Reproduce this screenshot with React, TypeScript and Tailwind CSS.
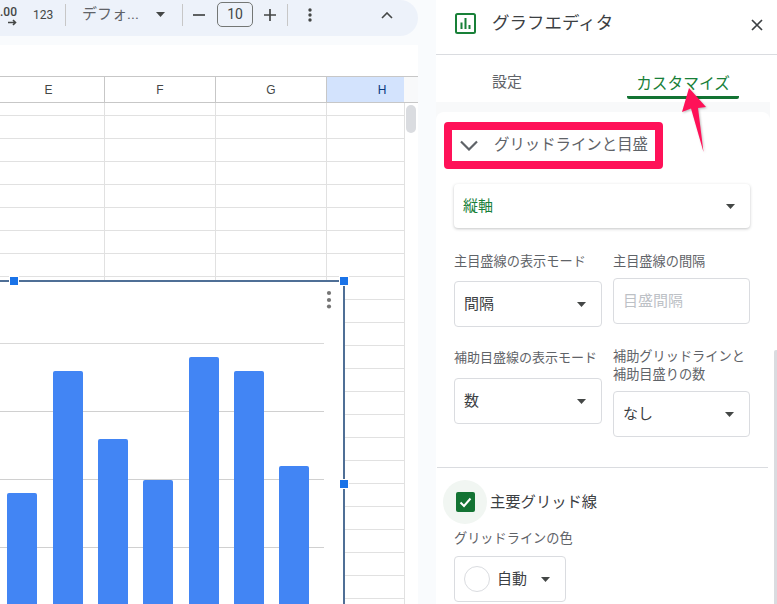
const font = "font-['Roboto','Noto_Sans_CJK_JP',sans-serif]";

const rows = Array.from({length: 22});
const bars = [111, 233, 165, 124, 247, 233, 138];

function Caret({className = ""}: {className?: string}) {
    return (
        <svg width="9" height="5" viewBox="0 0 10 5" preserveAspectRatio="none" className={`shrink-0 ${className}`}>
            <path d="M0 0h10L5 5z" fill="#444746"/>
        </svg>
    );
}

function Sep({className = ""}: {className?: string}) {
    return <div className={`w-px h-[22px] bg-[#c7c7c7] shrink-0 ${className}`}/>;
}

function Toolbar() {
    return (
        <div className="h-[36px] bg-[#edf2fa] rounded-r-[18px] flex items-center overflow-hidden text-[#444746] shrink-0 pb-[8px] pt-[1px] box-border">
            <div className="relative w-[17px] h-[22px] shrink-0 overflow-hidden">
                <span className="absolute right-0 top-[1px] text-[12px] leading-[14px] font-medium font-['Roboto']">.00</span>
                <svg width="9" height="7" viewBox="0 0 9 7" className="absolute right-0 bottom-0">
                    <path d="M0 3.5h7M5 1l2.5 2.5L5 6" stroke="#444746" strokeWidth="1.6" fill="none"/>
                </svg>
            </div>
            <span className="ml-[16px] w-[21px] text-[12px] font-['Roboto'] shrink-0">123</span>
            <Sep className="ml-[11px]"/>
            <span className="ml-[16px] w-[60px] text-[15px] whitespace-nowrap shrink-0 text-[#5f6368]">デフォ...</span>
            <Caret className="ml-[14px]"/>
            <Sep className="ml-[17px]"/>
            <svg width="12" height="2" className="ml-[10px] shrink-0"><path d="M0 1h12" stroke="#444746" strokeWidth="1.7"/></svg>
            <div className="ml-[12px] w-[36px] h-[25px] border border-[#747775] rounded-[5px] flex items-center justify-center text-[14px] font-['Roboto'] shrink-0">10</div>
            <svg width="12" height="12" className="ml-[11px] shrink-0"><path d="M0 6h12M6 0v12" stroke="#444746" strokeWidth="1.7"/></svg>
            <Sep className="ml-[11px]"/>
            <svg width="4" height="14" className="ml-[20px] shrink-0">
                <circle cx="2" cy="2" r="1.7" fill="#444746"/>
                <circle cx="2" cy="7" r="1.7" fill="#444746"/>
                <circle cx="2" cy="12" r="1.7" fill="#444746"/>
            </svg>
            <svg width="12" height="7" viewBox="0 0 12 7" className="ml-[69px] mt-[1px] shrink-0">
                <path d="M1 6l5-5 5 5" stroke="#444746" strokeWidth="1.6" fill="none"/>
            </svg>
        </div>
    );
}

function Grid() {
    return (
        <div className="flex-1 bg-white font-['Liberation_Sans',sans-serif]">
            <div className="h-[27px] flex border-t border-b border-[#c7c7c7] text-[12px] text-[#444746]">
                <div className="w-[105px] pr-[7px] border-r border-[#c7c7c7] flex items-center justify-center">E</div>
                <div className="w-[111px] border-r border-[#c7c7c7] flex items-center justify-center">F</div>
                <div className="w-[111px] border-r border-[#c7c7c7] flex items-center justify-center">G</div>
                <div className="w-[77px] pl-[33px] bg-[#d3e3fd] text-[#0b3a80] font-medium flex items-center justify-center">H</div>
                <div className="w-[14px] bg-[#f8f9fa]"/>
            </div>
            <div className="relative flex">
                <div className="w-[404px] border-r border-[#e1e1e1] box-content">
                    <div className="h-[13px] border-b border-[#e1e1e1] flex">
                        <div className="w-[105px] border-r border-[#e1e1e1]"/>
                        <div className="w-[111px] border-r border-[#e1e1e1]"/>
                        <div className="w-[111px] border-r border-[#e1e1e1]"/>
                    </div>
                    {rows.map((_, i) => (
                        <div key={i} className="h-[23px] border-b border-[#e1e1e1] flex">
                            <div className="w-[105px] border-r border-[#e1e1e1]"/>
                            <div className="w-[111px] border-r border-[#e1e1e1]"/>
                            <div className="w-[111px] border-r border-[#e1e1e1]"/>
                        </div>
                    ))}
                </div>
                <div className="absolute left-[406px] top-[2px] w-[10px] h-[28px] rounded-[5px] bg-[#dadce0]"/>
            </div>
        </div>
    );
}

function Chart() {
    return (
        <div className="absolute left-[-10px] top-[280px] w-[355px] h-[324px] bg-white border-t-2 border-r-2 border-[#4f6f96]">
            <div className="absolute left-0 top-[61px] w-[334px] h-px bg-[#d9d9d9]"/>
            <div className="absolute left-0 top-[129px] w-[334px] h-px bg-[#d0d0d0]"/>
            <div className="absolute left-0 top-[197px] w-[334px] h-px bg-[#d0d0d0]"/>
            <div className="absolute left-0 top-[265px] w-[334px] h-px bg-[#d0d0d0]"/>
            <div className="absolute left-[17.3px] right-0 bottom-0 flex items-end gap-[15.33px]">
                {bars.map((h, i) => (
                    <div key={i} className="w-[30px] bg-[#4285f4] rounded-t-[2px]" style={{height: h}}/>
                ))}
            </div>
            <svg width="6" height="20" className="absolute left-[336px] top-[8px]">
                <circle cx="3" cy="3" r="2.1" fill="#757575"/>
                <circle cx="3" cy="10" r="2.1" fill="#757575"/>
                <circle cx="3" cy="16.5" r="2.1" fill="#757575"/>
            </svg>
            <div className="absolute left-[19px] top-[-6px] w-[10px] h-[10px] bg-[#1a73e8] border border-white box-border"/>
            <div className="absolute left-[349px] top-[-6px] w-[10px] h-[10px] bg-[#1a73e8] border border-white box-border"/>
            <div className="absolute left-[349px] top-[197px] w-[10px] h-[10px] bg-[#1a73e8] border border-white box-border"/>
        </div>
    );
}

function Select({label, w, h = 46, className = ""}: {label: string; w: string; h?: number; className?: string}) {
    return (
        <div className={`${w} border border-[#dadce0] rounded-[4px] flex items-center justify-between pl-[9px] pr-[15px] text-[15px] text-[#3c4043] box-border ${className}`} style={{height: h}}>
            <span>{label}</span>
            <Caret/>
        </div>
    );
}

function Fields() {
    return (
        <>
            <div className="flex mt-[25px] ml-[18px]">
                <div className="w-[148px] flex flex-col">
                    <div className="h-[18px] text-[13.2px] leading-[18px] text-[#5f6368] whitespace-nowrap">主目盛線の表示モード</div>
                    <Select label="間隔" w="w-[148px]" className="mt-[10px]"/>
                </div>
                <div className="w-[137px] ml-[11px] flex flex-col">
                    <div className="h-[18px] text-[13.2px] leading-[18px] text-[#5f6368] whitespace-nowrap">主目盛線の間隔</div>
                    <div className="mt-[7px] h-[46px] border border-[#dadce0] rounded-[4px] flex items-center pl-[9px] text-[15px] text-[#bdc1c6]">目盛間隔</div>
                </div>
            </div>
            <div className="flex mt-[21px] ml-[18px]">
                <div className="w-[148px] flex flex-col">
                    <div className="mt-px h-[18px] text-[13px] leading-[18px] text-[#5f6368] whitespace-nowrap">補助目盛線の表示モード</div>
                    <Select label="数" w="w-[148px]" className="mt-[11px]"/>
                </div>
                <div className="w-[137px] ml-[11px] flex flex-col">
                    <div className="h-[36px] text-[13.2px] leading-[18px] text-[#5f6368] whitespace-nowrap">補助グリッドラインと<br/>補助目盛りの数</div>
                    <Select label="なし" w="w-[137px]" className="mt-[7px]"/>
                </div>
            </div>
        </>
    );
}

function Panel() {
    return (
        <div className="relative w-[341px] h-[604px] bg-white flex flex-col overflow-hidden shrink-0">
            <div className="h-[55px] border-b border-[#dadce0] flex items-center shrink-0 pb-[8px]">
                <svg width="21" height="21" viewBox="0 0 21 21" className="ml-[19px]">
                    <rect x="1" y="1" width="19" height="19" rx="1.5" fill="none" stroke="#188038" strokeWidth="2"/>
                    <path d="M5.5 9.5h2v6.5h-2zM9.5 5h2v11h-2zM13.5 12h2v4h-2z" fill="#188038"/>
                </svg>
                <span className="ml-[16px] text-[17.5px] text-[#3c4043] whitespace-nowrap">グラフエディタ</span>
                <svg width="12" height="12" viewBox="0 0 12 12" className="ml-[138px] mt-[3px]">
                    <path d="M1 1l10 10M11 1L1 11" stroke="#3c4043" strokeWidth="1.7"/>
                </svg>
            </div>
            <div className="h-[47px] flex shrink-0">
                <div className="w-[112px] ml-[15px] h-[44px] pt-[16px] text-center text-[15px] text-[#5f6368]">設定</div>
                <div className="w-[112px] ml-[64px] h-[44px] pt-[17px] text-center text-[15.7px] text-[#188038] border-b-[3px] border-[#137333] rounded-b-[2px] whitespace-nowrap">カスタマイズ</div>
            </div>
            <div className="w-[334px] flex-1 bg-[#f8f9fa] pt-[10px] flex flex-col">
                <div className="flex-1 bg-white rounded-t-[8px] flex flex-col">
                    <div className="ml-[8px] mt-[10px] w-[219px] h-[47px] border-[8px] border-[#ff1158] rounded-[4px] flex items-center box-border shrink-0">
                        <svg width="18" height="11" viewBox="0 0 18 11" className="ml-[8px]">
                            <path d="M1 1.5l8 8 8-8" stroke="#5f6368" strokeWidth="2.2" fill="none"/>
                        </svg>
                        <span className="ml-[16px] text-[15.4px] text-[#5f6368] whitespace-nowrap">グリッドラインと目盛</span>
                    </div>
                    <div className="ml-[18px] mt-[15px] w-[296px] h-[44px] rounded-[4px] shadow-[0_1px_3px_rgba(60,64,67,0.3)] flex items-center justify-between pl-[9px] pr-[15px] text-[15px] text-[#188038] shrink-0">
                        <span>縦軸</span>
                        <Caret/>
                    </div>
                    <Fields/>
                    <div className="ml-px mt-[30px] w-[331px] h-px bg-[#dadce0] shrink-0"/>
                    <div className="mt-[12px] ml-[7px] flex items-center shrink-0">
                        <div className="w-[44px] h-[44px] rounded-full bg-[#f1f6f2] flex items-center justify-center">
                            <div className="w-[19px] h-[20px] rounded-[2px] bg-[#137333] flex items-center justify-center">
                                <svg width="13" height="11" viewBox="0 0 13 11">
                                    <path d="M1.5 5.5l3.5 3.5 6.5-7.5" stroke="#fff" strokeWidth="2" fill="none"/>
                                </svg>
                            </div>
                        </div>
                        <span className="ml-[3px] text-[15.3px] text-[#3c4043] whitespace-nowrap">主要グリッド線</span>
                    </div>
                    <div className="ml-[18px] mt-[6px] h-[18px] text-[13.2px] leading-[18px] text-[#5f6368] shrink-0">グリッドラインの色</div>
                    <div className="ml-[18px] mt-[8px] w-[112px] h-[46px] border border-[#dadce0] rounded-[4px] flex items-center box-border shrink-0">
                        <div className="ml-[9px] w-[26px] h-[26px] rounded-full border border-[#dadce0] bg-white"/>
                        <span className="ml-[7px] text-[15px] text-[#3c4043]">自動</span>
                        <Caret className="ml-[14px]"/>
                    </div>
                </div>
            </div>
            <svg width="30" height="70" viewBox="0 0 30 70" className="absolute left-[244px] top-[86px] drop-shadow-[1px_1px_1px_rgba(0,0,0,0.25)]">
                <path d="M9 2L26 21 18 22 23.5 66 11 22.5 2 26z" fill="#ff1158"/>
            </svg>
            <div className="absolute left-[338px] top-[350px] w-[3px] h-[254px] bg-[#dadce0] rounded-tl-[2px]"/>
        </div>
    );
}

export default function App() {
    return (
        <div className={`w-[777px] h-[604px] overflow-hidden flex bg-white ${font}`}>
            <div className="w-[436px] h-[604px] bg-[#f9fbfd] shrink-0">
                <div className="relative w-[418px] h-[604px] flex flex-col overflow-hidden">
                    <Toolbar/>
                    <div className="h-[9px] bg-[#f9fbfd] shrink-0"/>
                    <div className="h-[31px] bg-white shrink-0"/>
                    <Grid/>
                    <Chart/>
                </div>
            </div>
            <Panel/>
        </div>
    );
}
